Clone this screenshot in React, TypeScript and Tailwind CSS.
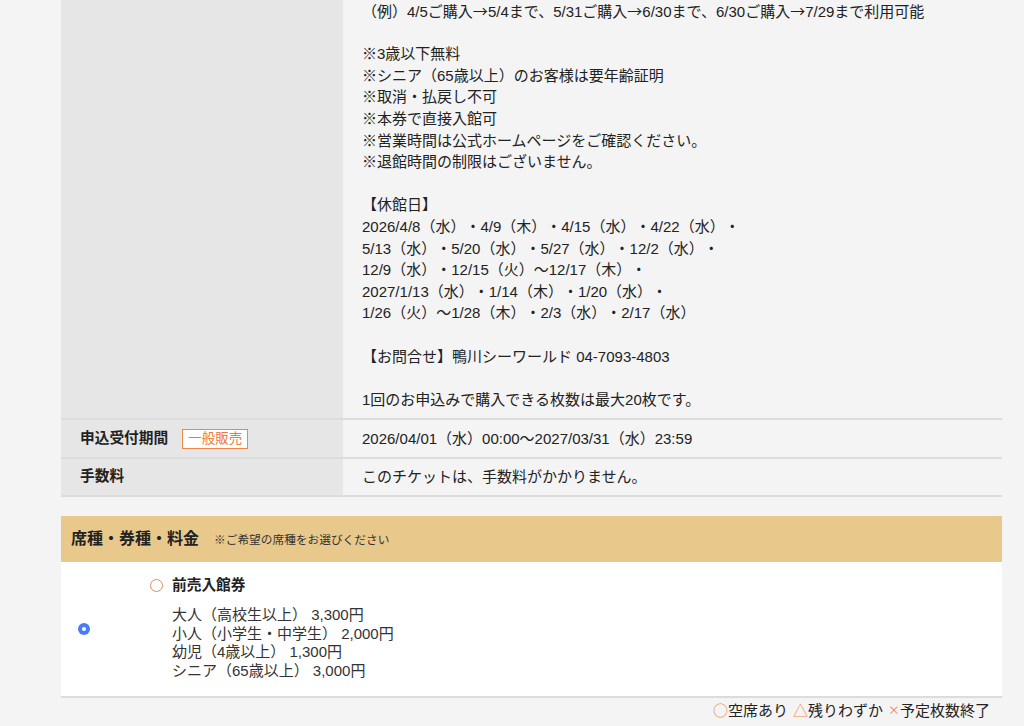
import React from 'react';

const font = { fontFamily: '"Liberation Sans", "Noto Sans CJK JP", sans-serif' };
const cjk = { fontFamily: '"Noto Sans CJK JP", sans-serif' };

const notes: string[] = [
  '（例）4/5ご購入→5/4まで、5/31ご購入→6/30まで、6/30ご購入→7/29まで利用可能',
  '',
  '※3歳以下無料',
  '※シニア（65歳以上）のお客様は要年齢証明',
  '※取消・払戻し不可',
  '※本券で直接入館可',
  '※営業時間は公式ホームページをご確認ください。',
  '※退館時間の制限はございません。',
  '',
  '【休館日】',
  '2026/4/8（水）・4/9（木）・4/15（水）・4/22（水）・',
  '5/13（水）・5/20（水）・5/27（水）・12/2（水）・',
  '12/9（水）・12/15（火）～12/17（木）・',
  '2027/1/13（水）・1/14（木）・1/20（水）・',
  '1/26（火）～1/28（木）・2/3（水）・2/17（水）',
  '',
  '【お問合せ】鴨川シーワールド 04-7093-4803',
  '',
  '1回のお申込みで購入できる枚数は最大20枚です。',
];

const prices = [
  '大人（高校生以上） 3,300円',
  '小人（小学生・中学生） 2,000円',
  '幼児（4歳以上） 1,300円',
  'シニア（65歳以上） 3,000円',
];

// arrows come out tiny in the latin face, so draw them with the CJK one
function withArrows(line: string) {
  const parts = line.split('→');
  return parts.map((p, i) => (
    <React.Fragment key={i}>
      {p}
      {i < parts.length - 1 && <span style={cjk}>→</span>}
    </React.Fragment>
  ));
}

function Row({ label, children, top }: { label: React.ReactNode; children: React.ReactNode; top?: boolean }) {
  return (
    <div className="flex border-b-2 border-[#dcdcdc]">
      <div className={`w-[282px] shrink-0 bg-[#e6e6e6] pl-[19px] flex items-center font-bold ${top ? '' : 'py-[7.5px]'}`}>
        {label}
      </div>
      <div className={`flex-1 pl-[19px] ${top ? 'pb-[8px]' : 'py-[7.5px]'}`}>{children}</div>
    </div>
  );
}

export default function App() {
  return (
    <div className="min-h-[726px] bg-[#f4f4f4] text-[#222] overflow-hidden [text-spacing-trim:space-all]" style={font}>
      <div className="ml-[61px] w-[941px]">
        <div className="text-[15px] leading-[21.6px]">
          <Row label="" top>
            {notes.map((line, i) => (
              <div key={i} className="h-[21.6px] whitespace-nowrap">
                {withArrows(line)}
              </div>
            ))}
          </Row>
          <Row
            label={
              <div className="flex items-center">
                <span className="text-[14.7px]">申込受付期間</span>
                <span className="ml-[14px] border border-[#f0874a] bg-white text-[#ef7a35] text-[13.5px] font-normal leading-[18px] px-[5px]">
                  一般販売
                </span>
              </div>
            }
          >
            2026/04/01（水）00:00～2027/03/31（水）23:59
          </Row>
          <Row label={<span className="text-[14.7px]">手数料</span>}>このチケットは、手数料がかかりません。</Row>
        </div>

        <div className="mt-[19px] bg-[#e9c98b] h-[46px] flex items-center pl-[10px]">
          <span className="text-[16px] font-bold">席種・券種・料金</span>
          <span className="ml-[15px] text-[11.7px] text-[#333]">※ご希望の席種をお選びください</span>
        </div>

        <div className="bg-white border-b-2 border-[#dcdcdc] flex items-center h-[136px]">
          <div className="w-[89px] pl-[17px] flex items-center">
            <span className="w-[12px] h-[12px] rounded-full bg-[#4a7df5] flex items-center justify-center">
              <span className="w-[4px] h-[4px] rounded-full bg-white" />
            </span>
          </div>
          <div className="pb-[4px]">
            <div className="flex items-center">
              <span className="w-[13px] h-[13px] rounded-full border border-[#f0874a]" />
              <span className="ml-[9px] text-[14.7px] font-bold">前売入館券</span>
            </div>
            <div className="mt-[10px] ml-[22px] text-[15px] leading-[18.7px] text-[#333]">
              {prices.map((p) => (
                <div key={p} className="whitespace-nowrap">
                  {p}
                </div>
              ))}
            </div>
          </div>
        </div>

        <div className="flex justify-end pr-[12px] pt-px text-[15px] leading-[22px] text-[#222]" style={cjk}>
          <span className="text-[#f0874a]">○</span>
          <span>空席あり</span>
          <span className="ml-[5px] text-[#f0874a]">△</span>
          <span>残りわずか</span>
          <span className="ml-[5px] text-[#f0874a] text-[12px] self-center">×</span>
          <span>予定枚数終了</span>
        </div>
      </div>
    </div>
  );
}
